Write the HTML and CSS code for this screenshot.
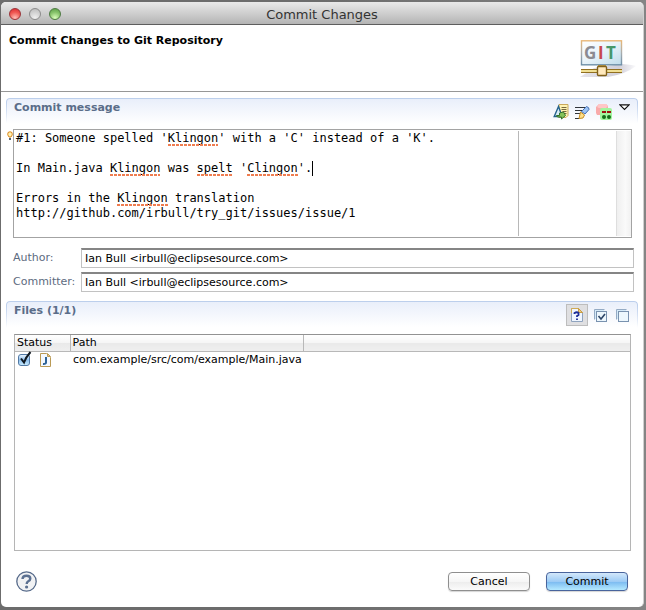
FILE: index.html
```
<!DOCTYPE html>
<html lang="en">
<head>
<meta charset="utf-8">
<title>Commit Changes</title>
<link rel="stylesheet" href="styles.css">
</head>
<body>
<main class="window">
  <header class="titlebar">
    <div class="lights">
      <button class="light light-red" aria-label="Close"></button>
      <button class="light light-gray" aria-label="Minimize"></button>
      <button class="light light-green" aria-label="Zoom"></button>
    </div>
    <span class="title">Commit Changes</span>
  </header>

  <div class="banner">
    <h1>Commit Changes to Git Repository</h1>
    <svg class="logo" width="56" height="40" viewBox="0 0 56 40" aria-hidden="true">
      <defs>
        <linearGradient id="screen" x1="0" y1="0" x2="1" y2="1"><stop offset="0" stop-color="#fff"/><stop offset=".45" stop-color="#eaf4fa"/><stop offset="1" stop-color="#bfdcea"/></linearGradient>
        <linearGradient id="frame" x1="0" y1="0" x2="0" y2="1"><stop offset="0" stop-color="#e9b777"/><stop offset=".5" stop-color="#a9adae"/><stop offset="1" stop-color="#6d8fa8"/></linearGradient>
        <linearGradient id="shade" x1="0" y1="0" x2="1" y2="0"><stop offset="0" stop-color="#e6e4ea"/><stop offset=".7" stop-color="#d2d0d9"/><stop offset="1" stop-color="#fafafc"/></linearGradient>
      </defs>
      <path d="M0 37L14 28L42 24Q54 25 56 26Q46 34 28 37z" fill="url(#shade)"/>
      <rect x="1.5" y=".8" width="40" height="24" fill="url(#screen)" stroke="url(#frame)" stroke-width="1.4"/>
      <g font-family="Open Sans, sans-serif" font-weight="700" font-size="17"><text x="4" y="19" fill="#8b8b91">G</text><text x="18" y="19" fill="#c7474c">I</text><text x="26" y="19" fill="#46976a">T</text></g>
      <path d="M1 29.5h41M1 32.5h41" stroke="#927020"/>
      <path d="M1 31h41" stroke="#f0df94" stroke-width="2"/>
      <path d="M18 25h8v3h-8z" fill="#b39547"/>
      <rect x="17.5" y="26.5" width="9" height="9" rx="1" fill="#ffe9bd" stroke="#80601a" stroke-width="1.4"/>
    </svg>
  </div>

  <div class="content">
    <section class="section">
      <div class="section-head head-message">
        <h2 id="message-title">Commit message</h2>
        <div class="tools tools-message">
          <button class="tool" aria-label="Amend previous commit">
            <svg width="16" height="16" viewBox="0 0 15 16"><path d="M5.500.500h9v11l-2 2h-7z" fill="#fff3b2" stroke="#c9a85c"/><path d="M8 3.500h5M8 5.500h5M9 7.500h4M10 9.500h3" stroke="#77683f"/><path d="M5 2.500L.700 12.500h8z" fill="#d8ecf7" stroke="#25628b" stroke-width="1.400"/><path d="M3 11.500h3V9l4-1 2 3.500L8 15v-2H4z" fill="#86c25a" stroke="#31752b"/></svg>
          </button>
          <button class="tool" aria-label="Add signed-off-by">
            <svg width="15" height="15" viewBox="0 0 15 15"><path d="M0 2.500h12M0 5.500h9M0 8.500h5M0 13.500h4" stroke="#30343a"/><path d="M11.500 1.500q3 1 2.500 3L10 9 6.500 6.500z" fill="#9dc4f4" stroke="#4670b5"/><path d="M5.500 7l4 3-1.500 3-4 .5z" fill="#ffe08a" stroke="#c68c20"/></svg>
          </button>
          <button class="tool" aria-label="Compute change id">
            <svg width="17" height="16" viewBox="0 0 17 16"><path d="M3 0h7l2 2v7l-2 2H1L0 9V3z" fill="#f9aaaa"/><path d="M3 0h7l2 2-2 2H3L1 3z" fill="#ffc6c6"/><rect x="4" y="4" width="12" height="12" rx="2" fill="#a2f59e"/><path d="M6 8h4M11 8h4" stroke="#9c1111" stroke-width="2"/><circle cx="8" cy="13" r="2" fill="#126b18"/><circle cx="13" cy="13" r="2" fill="#126b18"/></svg>
          </button>
          <button class="tool tool-menu" aria-label="View menu">
            <svg width="11" height="7" viewBox="0 0 11 7"><path d="M.8.8h9.400L5.500 5.500z" fill="#fff" stroke="#111" stroke-width="1.200"/></svg>
          </button>
        </div>
      </div>
      <div class="editor">
        <svg class="bulb" width="6" height="10" viewBox="0 0 6 10" aria-hidden="true"><path d="M1 1.500Q3 0 5 1.500Q6 4 4 6H2Q0 4 1 1.500z" fill="#fff1b0" stroke="#d9861c"/><path d="M2 7h2v2H2z" fill="#586372"/></svg>
        <textarea class="message" aria-labelledby="message-title" spellcheck="false">#1: Someone spelled 'Klingon' with a 'C' instead of a 'K'.

In Main.java Klingon was spelt 'Clingon'.

Errors in the Klingon translation
http://github.com/irbull/try_git/issues/issue/1</textarea>
        <div class="marks" aria-hidden="true">
          <i class="mark line-1 col-21 len-7"></i>
          <i class="mark line-3 col-13 len-7"></i>
          <i class="mark line-3 col-25 len-5"></i>
          <i class="mark line-3 col-32 len-7"></i>
          <i class="mark line-5 col-14 len-7"></i>
          <i class="caret line-3"></i>
        </div>
        <div class="margin-line"></div>
        <div class="scroll-track"></div>
      </div>
      <div class="fields">
        <label for="author">Author:</label>
        <input id="author" type="text" value="Ian Bull &lt;irbull@eclipsesource.com&gt;">
        <label for="committer">Committer:</label>
        <input id="committer" type="text" value="Ian Bull &lt;irbull@eclipsesource.com&gt;">
      </div>
    </section>

    <section class="section section-files">
      <div class="section-head head-files">
        <h2>Files (1/1)</h2>
        <div class="tools tools-files">
          <button class="tool tool-pressed" aria-label="Show untracked files" aria-pressed="true">
            <svg width="12" height="14" viewBox="0 0 12 14"><path d="M.5.500h7l4 4v9H.5z" fill="#f0f6ff" stroke="#8fa3be"/><path d="M.5 5V.500h7l4 4" fill="none" stroke="#d0aa55"/><path d="M7.500.500v4h4z" fill="#edcc80" stroke="#c99d44"/><path d="M3.500 6V5q2.500-1.500 4 0v2L6 8v1M6 10.500v1.500" fill="none" stroke="#1c2c98" stroke-width="1.800"/></svg>
          </button>
          <button class="tool" aria-label="Select all">
            <svg width="13" height="13" viewBox="0 0 13 13"><path d="M.5 10.500V.500h10" fill="none" stroke="#94abc5"/><path d="M1 1h9v2H3v7H1z" fill="#d5eaf8"/><rect x="2.500" y="2.500" width="10" height="10" fill="#edf7fd" stroke="#7992af"/><path d="M4.500 7l2.500 3 4-5" fill="none" stroke="#2d4668" stroke-width="1.600"/></svg>
          </button>
          <button class="tool" aria-label="Deselect all">
            <svg width="13" height="13" viewBox="0 0 13 13"><path d="M.5 10.500V.500h10" fill="none" stroke="#94abc5"/><path d="M1 1h9v2H3v7H1z" fill="#d5eaf8"/><rect x="2.500" y="2.500" width="10" height="10" fill="#edf7fd" stroke="#7992af"/></svg>
          </button>
        </div>
      </div>
      <div class="table-box">
        <table class="files">
          <thead><tr><th class="col-status">Status</th><th class="col-path">Path</th><th class="col-rest"></th></tr></thead>
          <tbody>
            <tr>
              <td><div class="status">
                <span class="check"><input type="checkbox" checked aria-label="Include Main.java">
                <svg class="tick" width="14" height="14" viewBox="0 0 14 14" aria-hidden="true"><path d="M3 7.500L6 11.500Q8 6 12.500 1" fill="none" stroke="#101820" stroke-width="2"/></svg></span>
                <svg width="11" height="14" viewBox="0 0 11 14" aria-hidden="true"><path d="M.5.500h6l4 4v9H.5z" fill="#f4f9ff" stroke="#ba9a55"/><path d="M7.500.500v3h3z" fill="#e9cb87" stroke="#ba9a55"/><path d="M6 4v5.500q0 1.700-3 1.500" fill="none" stroke="#2c6297" stroke-width="2"/></svg></div></td>
              <td class="path">com.example/src/com/example/Main.java</td><td></td>
            </tr>
          </tbody>
        </table>
      </div>
    </section>
  </div>

  <footer class="footer">
    <button class="help" aria-label="Help">
      <svg width="21" height="21" viewBox="0 0 21 21"><circle cx="10.500" cy="10.500" r="9.700" fill="#f1f2f4" stroke="#566a8a" stroke-width="1.300"/><path d="M6.500 8Q6.700 4.800 10.500 4.800Q14.300 4.800 14.300 7.700Q14.300 9.300 12 10.500Q10.700 11.300 10.700 13" fill="none" stroke="#5b7091" stroke-width="2.400"/><circle cx="10.600" cy="16" r="1.600" fill="#5b7091"/></svg>
    </button>
    <div class="actions">
      <button class="push">Cancel</button>
      <button class="push push-default">Commit</button>
    </div>
  </footer>
</main>
</body>
</html>
```
FILE: styles.css
```
* { box-sizing: border-box; }

body {
  margin: 0;
  height: 100vh;
  padding: 2px 2px 3px 1px;
  display: flex;
  background: linear-gradient(90deg, #6c6c6c, #6c6c6c 50%, #858585);
  color: #000;
  font: 11px/15px "DejaVu Sans", sans-serif;
}

button, input, textarea { font: inherit; color: inherit; margin: 0; }
button { padding: 0; border: 0; background: none; }
svg { display: block; }
h1, h2 { margin: 0; font-size: 11px; line-height: 16px; font-weight: 700; }

.window {
  flex: 1;
  min-width: 0;
  display: flex;
  flex-direction: column;
  overflow: hidden;
  border-radius: 5px;
  background: #fff;
  border-right: 1px solid #d0d0d0;
}

.titlebar {
  position: relative;
  display: flex;
  align-items: center;
  justify-content: center;
  height: 23px;
  border-bottom: 1px solid #5e5e5e;
  background: linear-gradient(#e9e9e9, #cfcfcf 50%, #b4b4b4);
}
.title { padding-top: 3px; font-size: 13px; line-height: 18px; color: #333; }
.lights { position: absolute; left: 8px; top: 6px; display: flex; gap: 8px; }
.light { width: 12px; height: 12px; border-radius: 50%; border: 1px solid #777; }
.light-red { background: radial-gradient(circle at 50% 90%, #ffc1b8, #f05a54 55%, #d9262d); border-color: #9b3338; }
.light-gray { background: radial-gradient(circle at 50% 90%, #f1f1f1, #cfcfcf 60%, #b9b9b9); border-color: #8b8b8b; }
.light-green { background: radial-gradient(circle at 50% 90%, #dcffbd, #88c46c 55%, #589c43); border-color: #4d7b41; }

.banner {
  display: flex;
  justify-content: space-between;
  align-items: flex-start;
  height: 67px;
  padding: 8px 7px 0 8px;
  border-bottom: 1px solid #979797;
}
.logo { margin-top: 7px; }

.content { flex: 1; display: flex; flex-direction: column; gap: 9px; padding: 6px 5px 0; }
.section-files { flex: 1; display: flex; flex-direction: column; }

.section-head {
  position: relative;
  display: flex;
  justify-content: space-between;
  align-items: flex-start;
  padding-left: 8px;
  border-radius: 4px 4px 0 0;
  background: linear-gradient(#e8eefa, #fff 26px);
}
.section-head::before {
  content: "";
  position: absolute;
  inset: 0 0 6px;
  border: 1px solid #bccfec;
  border-bottom: 0;
  border-radius: 4px 4px 0 0;
  mask-image: linear-gradient(#000 4px, transparent);
  pointer-events: none;
}
.section-head h2 { padding-top: 2px; color: #5a6d89; }
.head-message { height: 31px; }
.head-files { height: 33px; }
.tools { display: flex; }
.tools-message { gap: 6px; padding: 6px 8px 0 0; }
.tool-menu { align-self: flex-start; }
.tools-files { align-items: center; gap: 9px; padding: 3px 9px 0 0; }
.tool-pressed {
  display: grid;
  place-items: center;
  width: 22px;
  height: 22px;
  margin-right: -3px;
  border: 1px solid #bdbdbd;
  background: #dfdfe1;
}

.editor {
  position: relative;
  height: 109px;
  margin: 0 6px 0 7px;
  font: 12px/15px "DejaVu Sans Mono", monospace;
}
.message {
  display: block;
  width: 100%;
  height: 100%;
  padding: 1px 16px 1px 2px;
  border: 1px solid #a3a3a3;
  background: #fff;
  resize: none;
  overflow: hidden;
  outline: 0;
}
.bulb { position: absolute; left: -6px; top: 2px; }
.marks { position: absolute; left: 3px; top: 2px; pointer-events: none; }
.mark {
  position: absolute;
  height: 2px;
  margin-top: 13px;
  background: repeating-linear-gradient(90deg, #ef7d50 0 3px, transparent 3px 4px);
}
.line-1 { top: 0; }
.line-3 { top: 30px; }
.line-5 { top: 60px; }
.col-13 { left: 13ch; }
.col-14 { left: 14ch; }
.col-21 { left: 21ch; }
.col-25 { left: 25ch; }
.col-32 { left: 32ch; }
.len-5 { width: 5ch; }
.len-7 { width: 7ch; }
.caret { position: absolute; left: 41ch; width: 1px; height: 15px; background: #000; }
.margin-line { position: absolute; right: 113px; top: 2px; bottom: 2px; width: 1px; background: #b8b8b8; }
.scroll-track {
  position: absolute;
  right: 1px;
  top: 2px;
  bottom: 2px;
  width: 15px;
  border-left: 1px solid #dedede;
  background: linear-gradient(90deg, #efefef, #fafafa 60%, #f1f1f1);
}

.fields {
  display: grid;
  grid-template-columns: 68px 1fr;
  gap: 4px 0;
  margin: 10px 4px 0 7px;
}
.fields label { line-height: 19px; color: #5d6b80; }
.fields input {
  width: 100%;
  height: 20px;
  padding: 0 3px;
  border: 1px solid #c2c2c2;
  border-top: 2px solid #858585;
  border-radius: 0;
  background: #fff;
  outline: 0;
}

.table-box {
  flex: 1;
  margin: 0 7px 0 8px;
  border: 1px solid #b5b5b5;
  border-top-color: #929292;
}
.files { width: 100%; border-collapse: collapse; table-layout: fixed; }
.files th {
  height: 16px;
  padding: 0 2px;
  border-bottom: 1px solid #b8b8b8;
  background: linear-gradient(#fff, #f5f5f5 50%, #e9e9e9 50%, #efefef);
  line-height: 14px;
  font-weight: 400;
  text-align: left;
}
.files td { height: 17px; padding: 0 2px; line-height: 16px; white-space: nowrap; }
.files .col-status { width: 55px; }
.files .col-path { width: 233px; border-left: 1px solid #b8b8b8; border-right: 1px solid #b8b8b8; }
.files .path { padding-left: 3px; }
.status { display: flex; align-items: center; gap: 10px; padding-left: 1px; }
.check { position: relative; display: flex; }
.status input {
  appearance: none;
  width: 12px;
  height: 12px;
  border: 1px solid #5279a4;
  border-radius: 3px;
  background: linear-gradient(#eaf5ff, #8ebfed 50%, #c6eaff);
}
.tick { position: absolute; left: 0; top: -3px; pointer-events: none; }
.status input:not(:checked) + .tick { display: none; }

.footer {
  display: flex;
  align-items: center;
  justify-content: space-between;
  padding: 20px 15px 15px;
}
.actions { display: flex; gap: 16px; }
.push {
  width: 82px;
  height: 19px;
  border: 1px solid #8f8f8f;
  border-radius: 4px;
  background: linear-gradient(#fff, #f6f6f6 50%, #ececec 50%, #fbfbfb);
  line-height: 17px;
  box-shadow: 0 1px 1px #d5d5d5;
}
.push-default {
  border-color: #49649c;
  background: linear-gradient(#d3e8fb, #9dcbf5 50%, #78b8f0 50%, #b4e9ff);
}
```
